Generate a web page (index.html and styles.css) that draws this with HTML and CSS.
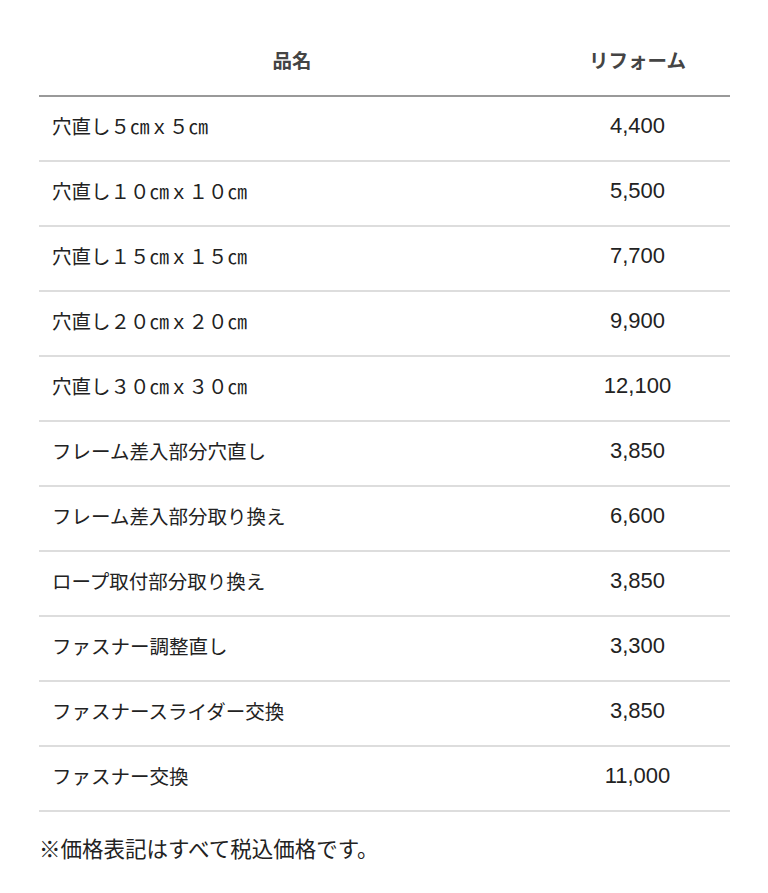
FILE: index.html
```html
<!DOCTYPE html>
<html lang="ja">
<head>
<meta charset="utf-8">
<link rel="stylesheet" href="styles.css">
</head>
<body>
<div class="wrap">
<table class="price">
<thead>
<tr><th class="c-name">品名</th><th class="c-price">リフォーム</th></tr>
</thead>
<tbody>
<tr><td class="c-name">穴直し５㎝ｘ５㎝</td><td class="c-price">4,400</td></tr>
<tr><td class="c-name">穴直し１０㎝ｘ１０㎝</td><td class="c-price">5,500</td></tr>
<tr><td class="c-name">穴直し１５㎝ｘ１５㎝</td><td class="c-price">7,700</td></tr>
<tr><td class="c-name">穴直し２０㎝ｘ２０㎝</td><td class="c-price">9,900</td></tr>
<tr><td class="c-name">穴直し３０㎝ｘ３０㎝</td><td class="c-price">12,100</td></tr>
<tr><td class="c-name">フレーム差入部分穴直し</td><td class="c-price">3,850</td></tr>
<tr><td class="c-name">フレーム差入部分取り換え</td><td class="c-price">6,600</td></tr>
<tr><td class="c-name">ロープ取付部分取り換え</td><td class="c-price">3,850</td></tr>
<tr><td class="c-name">ファスナー調整直し</td><td class="c-price">3,300</td></tr>
<tr><td class="c-name">ファスナースライダー交換</td><td class="c-price">3,850</td></tr>
<tr><td class="c-name">ファスナー交換</td><td class="c-price">11,000</td></tr>
</tbody>
</table>
<p class="note">※価格表記はすべて税込価格です。</p>
</div>
</body>
</html>
```
FILE: styles.css
```css
html, body {
  margin: 0;
  padding: 0;
  background: #fff;
}
body {
  font-family: "Noto Sans CJK JP", "Noto Sans", sans-serif;
  color: #222;
}
.wrap {
  padding: 31px 38px 0 39px;
}
.price {
  width: 691px;
  border-collapse: collapse;
  table-layout: fixed;
}
.price th {
  height: 65px;
  padding: 0 0 6px 0;
  box-sizing: border-box;
  font-size: 19.5px;
  font-weight: bold;
  color: #444;
  text-align: center;
  border-bottom: 2px solid #999;
  vertical-align: middle;
  line-height: 1;
}
.price td {
  height: 65px;
  box-sizing: border-box;
  padding: 0 0 6px 0;
  font-size: 19.5px;
  line-height: 1;
  border-bottom: 2px solid #ddd;
  vertical-align: middle;
}
.price th.c-name { width: 506px; }
.price td.c-name {
  padding-left: 13px;
  text-align: left;
}
.price td.c-price {
  text-align: center;
  font-family: "Liberation Sans", "Noto Sans CJK JP", sans-serif;
  font-size: 22px;
  color: #222;
}
.price th.c-price {
  text-align: center;
}
.note {
  margin: 23px 0 0 0;
  font-size: 21.5px;
  line-height: 26px;
  color: #222;
}
```
